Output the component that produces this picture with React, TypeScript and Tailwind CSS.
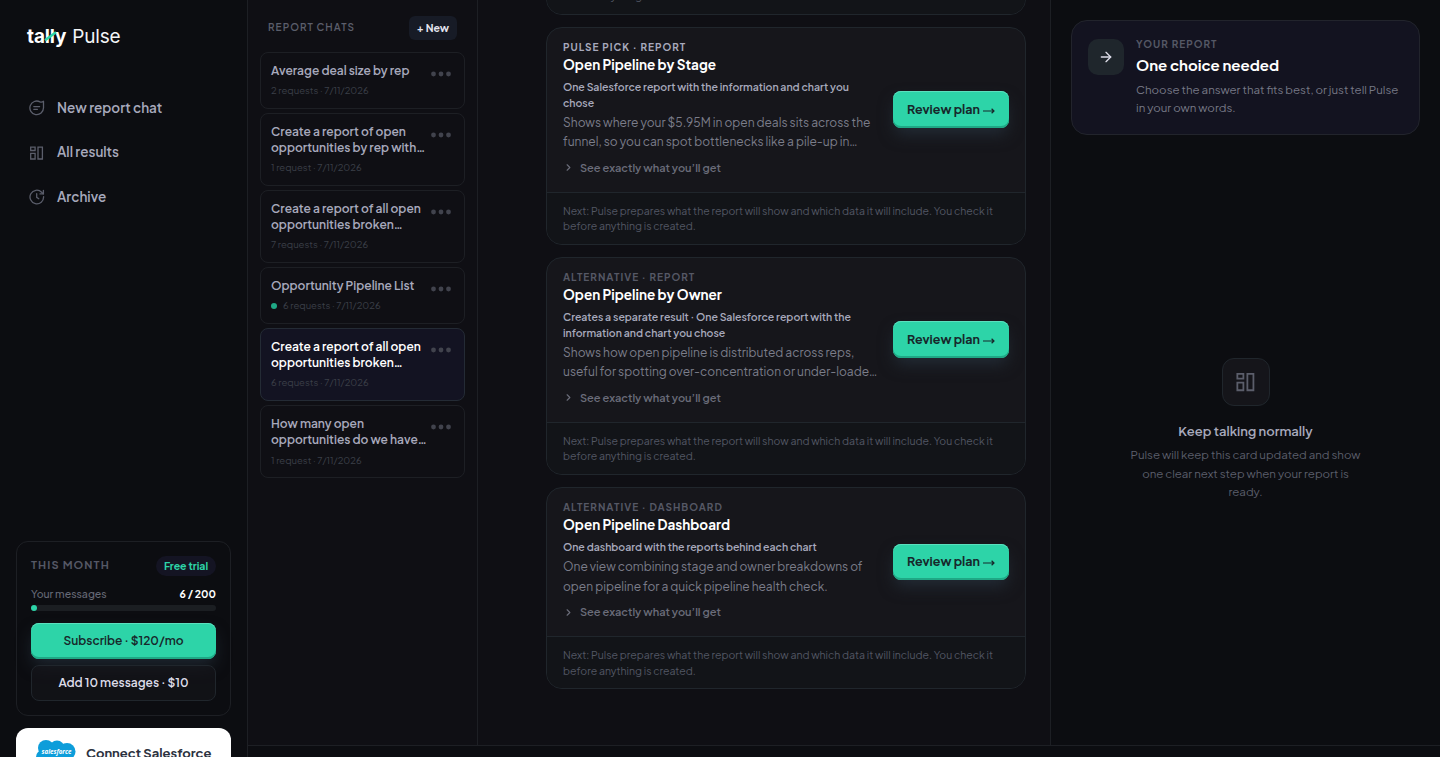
import React from 'react';
import { ArrowRight, ChevronRight } from 'lucide-react';

interface Chat {
  title: string[];
  meta: string;
  active?: boolean;
  unread?: boolean;
}

interface Plan {
  eyebrow: string;
  highlighted?: boolean;
  title: string;
  summary: string[];
  description: string[];
}

const chats: Chat[] = [
  { title: ['Average deal size by rep'], meta: '2 requests · 7/11/2026' },
  { title: ['Create a report of open', 'opportunities by rep with…'], meta: '1 request · 7/11/2026' },
  { title: ['Create a report of all open', 'opportunities broken…'], meta: '7 requests · 7/11/2026' },
  { title: ['Opportunity Pipeline List'], meta: '6 requests · 7/11/2026', unread: true },
  { title: ['Create a report of all open', 'opportunities broken…'], meta: '6 requests · 7/11/2026', active: true },
  { title: ['How many open', 'opportunities do we have…'], meta: '1 request · 7/11/2026' }
];

const plans: Plan[] = [
  {
    eyebrow: 'PULSE PICK · REPORT',
    highlighted: true,
    title: 'Open Pipeline by Stage',
    summary: ['One Salesforce report with the information and chart you', 'chose'],
    description: ['Shows where your $5.95M in open deals sits across the', 'funnel, so you can spot bottlenecks like a pile-up in…']
  },
  {
    eyebrow: 'ALTERNATIVE · REPORT',
    title: 'Open Pipeline by Owner',
    summary: ['Creates a separate result · One Salesforce report with the', 'information and chart you chose'],
    description: ['Shows how open pipeline is distributed across reps,', 'useful for spotting over-concentration or under-loade…']
  },
  {
    eyebrow: 'ALTERNATIVE · DASHBOARD',
    title: 'Open Pipeline Dashboard',
    summary: ['One dashboard with the reports behind each chart'],
    description: ['One view combining stage and owner breakdowns of', 'open pipeline for a quick pipeline health check.']
  }
];

const Lines: React.FC<{ lines: string[]; className: string }> = ({ lines, className }) => (
  <div className={className}>
    {lines.map((line) => (
      <span key={line} className="block whitespace-nowrap">{line}</span>
    ))}
  </div>
);

const ChatIcon: React.FC = () => (
  <svg viewBox="0 0 16 16" className="w-4 h-4" fill="none" stroke="currentColor" strokeWidth="1.3" strokeLinecap="round" strokeLinejoin="round">
    <path d="M14.5 1.3V7.8A6.8 6.8 0 1 1 11 1.9Q13 2.5 14.5 1.3Z" />
    <path d="M4.8 6.6h5.8M4.8 9.3h3.6" />
  </svg>
);

const BoardIcon: React.FC<{ className: string }> = ({ className }) => (
  <svg viewBox="0 0 16 16" className={className} fill="none" stroke="currentColor" strokeWidth="1.3">
    <path d="M1.7 2.1h4.4v3.4H1.7zM1.7 8.4h4.4V14H1.7zM9 2.1h4.4V14H9z" />
  </svg>
);

const ArchiveIcon: React.FC = () => (
  <svg viewBox="0 0 16 16" className="w-4 h-4" fill="none" stroke="currentColor" strokeWidth="1.3" strokeLinecap="round" strokeLinejoin="round">
    <path d="M14.6 7.6A6.8 6.8 0 1 1 12.6 3.2L14.2 4.8" />
    <path d="M14.4 1.3v3.6h-3.4" />
    <path d="M7.7 4.7v3.7l2.1 1.3" />
  </svg>
);

const Logo: React.FC = () => (
  <div className="relative flex items-center h-6 whitespace-nowrap text-white font-['Inter',sans-serif]">
    <span className="text-[19px] font-bold tracking-[-0.15px]">tally</span>
    <span className="ml-[6px] text-[19px] font-normal tracking-[-0.2px] text-gray-100">Pulse</span>
    <svg viewBox="0 0 14 12" className="absolute left-[17px] top-[4px] w-3.5 h-3" stroke="#2dd4a8" strokeWidth="2.6">
      <path d="M1 10.3 12 2.2" />
    </svg>
  </div>
);

const ChatCard: React.FC<{ chat: Chat }> = ({ chat }) => (
  <div
    className={`flex justify-between rounded-lg border px-2.5 py-2.5 ${
      chat.active ? 'border-[#242b35] bg-[#131322]' : 'border-[#1d1f24]'
    }`}
  >
    <div className="min-w-0">
      <Lines
        lines={chat.title}
        className={`text-xs leading-[16.2px] font-semibold ${chat.active ? 'text-white' : 'text-[#a7a9bc]'}`}
      />
      <div className="mt-[5px] flex items-center whitespace-nowrap text-[9.5px] leading-[13.7px] text-[#3b3f48]">
        {chat.unread && <span className="w-1.5 h-1.5 mr-1.5 rounded-full bg-[#1fa885]" />}
        {chat.meta}
      </div>
    </div>
    <svg viewBox="0 0 20 6" className="w-5 h-1.5 mt-2 mr-[3px] shrink-0 fill-[#41434d]">
      <circle cx="2.5" cy="3" r="2.4" />
      <circle cx="10" cy="3" r="2.4" />
      <circle cx="17.5" cy="3" r="2.4" />
    </svg>
  </div>
);

const PlanFooter: React.FC = () => (
  <Lines
    lines={['Next: Pulse prepares what the report will show and which data it will include. You check it', 'before anything is created.']}
    className="border-t border-[#20262c] bg-[#121418] px-4 pt-2.5 pb-[10px] text-[10.5px] leading-[15.5px] text-[#535764]"
  />
);

const PlanCard: React.FC<{ plan: Plan }> = ({ plan }) => (
  <div className="shrink-0 overflow-hidden rounded-2xl border border-[#20262c] bg-[#16161b]">
    <div className="flex items-center justify-between px-4 pt-3 pb-4">
      <div>
        <div className={`text-[10px] leading-[14px] font-bold tracking-[1px] ${plan.highlighted ? 'text-[#a7a9bc]' : 'text-[#555865]'}`}>
          {plan.eyebrow}
        </div>
        <h3 className="mt-[1.5px] text-[13.5px] leading-5 font-bold text-white">{plan.title}</h3>
        <Lines lines={plan.summary} className="mt-[3.5px] text-[10.5px] leading-[15.75px] font-semibold text-[#a7a9bc]" />
        <Lines lines={plan.description} className="mt-[2.75px] text-xs leading-[19.25px] text-[#7b7d8a]" />
        <div className="mt-[8.25px] flex items-center text-[11px] leading-4 font-semibold text-[#6a6c79]">
          <ChevronRight className="w-[11px] h-[11px] mr-1.5" strokeWidth={2.5} />
          See exactly what you’ll get
        </div>
      </div>
      <ReviewButton />
    </div>
    <PlanFooter />
  </div>
);

const ReviewButton: React.FC = () => (
  <button className="mt-[3.5px] flex h-[36.25px] w-29 shrink-0 items-center justify-center rounded-lg bg-[#2dd4a8] text-[12.5px] font-bold text-[#17282b] shadow-[0_8px_16px_-2px_#232c36,inset_0_1px_0_#5be0be,inset_0_-2px_0_#1fa885]">
    Review plan
    <svg viewBox="0 0 12 8" className="ml-[3px] mt-0.5 w-3 h-2" fill="none" stroke="currentColor" strokeWidth="1.2">
      <path d="M0 4h11M8.6 1.7 11 4 8.6 6.3" />
    </svg>
  </button>
);

const UsageCard: React.FC = () => (
  <div className="h-[175px] rounded-xl border border-[#1d1f24] px-3.5 pt-3.5">
    <div className="flex h-5 items-center justify-between">
      <span className="-mt-0.5 text-[11px] font-bold tracking-[1.1px] text-[#555865]">THIS MONTH</span>
      <span className="flex h-5 w-15 items-center justify-center rounded-full bg-[#141423] text-[10.5px] font-bold text-[#2dd4a8]">Free trial</span>
    </div>
    <div className="mt-2.5 flex h-4 items-center justify-between text-[10.5px]">
      <span className="font-medium text-[#666976]">Your messages</span>
      <span className="font-bold text-white">6 / 200</span>
    </div>
    <div className="mt-[3px] h-1.5 rounded-full bg-[#1b1e22]">
      <div className="h-1.5 w-1.5 rounded-full bg-[#2dd4a8]" />
    </div>
    <button className="mt-3 flex h-9 w-full items-center justify-center rounded-lg bg-[#2dd4a8] pb-px text-xs font-semibold text-[#17282b] shadow-[0_8px_16px_-2px_#1f2832,inset_0_1px_0_#5be0be,inset_0_-2px_0_#1fa885]">
      Subscribe · $120/mo
    </button>
    <button className="mt-1.5 flex h-9 w-full items-center justify-center rounded-lg border border-[#20262c] bg-[#15151b]/60 pb-px text-xs font-semibold text-[#dcdce8]">
      Add 10 messages · $10
    </button>
  </div>
);

const SalesforceLogo: React.FC = () => (
  <svg viewBox="0 0 40 28" className="w-10 h-7 shrink-0">
    <g fill="#0d9dda">
      <circle cx="10" cy="8" r="8" />
      <circle cx="21" cy="8" r="7.5" />
      <circle cx="31" cy="11.5" r="8.5" />
      <circle cx="7" cy="17" r="7" />
      <circle cx="16" cy="20" r="7.5" />
      <circle cx="25" cy="18" r="7.5" />
    </g>
    <text x="20.5" y="14" textAnchor="middle" fill="#fff" fontSize="6.2" fontStyle="italic" fontFamily="Open Sans, sans-serif">salesforce</text>
  </svg>
);

const Sidebar: React.FC = () => (
  <aside className="flex w-[248px] shrink-0 flex-col border-r border-[#1d1f24] bg-[#0c0d11] px-4">
    <div className="mt-[25.5px] ml-[11px]">
      <Logo />
    </div>
    <nav className="mt-[36.25px] flex flex-col text-[13.5px] font-semibold text-[#a7a9bc]">
      <a className="flex h-[44.5px] items-center gap-3 pl-[13px]">
        <span className="text-[#5b5e6b]"><ChatIcon /></span>New report chat
      </a>
      <a className="flex h-[44.5px] items-center gap-3 pl-[13px]">
        <span className="text-[#5b5e6b]"><BoardIcon className="w-4 h-4" /></span>All results
      </a>
      <a className="flex h-[44.5px] items-center gap-3 pl-[13px]">
        <span className="text-[#5b5e6b]"><ArchiveIcon /></span>Archive
      </a>
    </nav>
    <div className="mt-auto h-[216px] shrink-0">
      <UsageCard />
      <div className="mt-3 flex h-[52px] items-center gap-2.5 rounded-t-xl bg-white pl-5 text-[13px] font-bold whitespace-nowrap text-[#2c3240]">
        <SalesforceLogo />
        Connect Salesforce
      </div>
    </div>
  </aside>
);

const ChatList: React.FC = () => (
  <section className="w-[230px] shrink-0 border-r border-[#1d1f24] bg-[#0f0f14] px-3">
    <div className="mt-4 mb-3 flex h-6 items-center justify-between pr-2 pl-2">
      <span className="-mt-0.5 text-[10px] font-semibold tracking-[1.05px] text-[#5b5e6b]">REPORT CHATS</span>
      <button className="h-6 w-12 rounded-md bg-[#171b26] text-[10.5px] font-bold text-[#e4e4ee]">+ New</button>
    </div>
    <div className="flex w-[205px] flex-col gap-1">
      {chats.map((chat, index) => (
        <ChatCard key={index} chat={chat} />
      ))}
    </div>
  </section>
);

const ReportPanel: React.FC = () => (
  <section className="flex w-[390px] shrink-0 flex-col border-l border-[#1d1f24] bg-[#0c0d11] px-5 pt-5">
    <div className="flex h-[115px] rounded-2xl border border-[#22242c] bg-[#131320] px-4">
      <span className="mt-[18px] flex h-9 w-9 shrink-0 items-center justify-center rounded-[10px] bg-[#1f262c] text-[#dcdce8]">
        <ArrowRight className="w-4 h-4" strokeWidth={2} />
      </span>
      <div className="ml-3 pt-4">
        <div className="text-[10px] leading-[14px] font-bold tracking-[1px] text-[#555865]">YOUR REPORT</div>
        <h2 className="mt-1 text-[15px] leading-5 font-bold text-white">One choice needed</h2>
        <Lines
          lines={['Choose the answer that fits best, or just tell Pulse', 'in your own words.']}
          className="mt-[5.5px] text-[11.5px] leading-[18px] text-[#777986]"
        />
      </div>
    </div>
    <div className="mt-[223px] flex flex-col items-center text-center">
      <span className="flex h-12 w-12 items-center justify-center rounded-xl border border-[#20262c] bg-[#15151a] text-[#5b5e6b]">
        <BoardIcon className="w-[22px] h-[22px]" />
      </span>
      <h3 className="mt-[15px] text-[13px] leading-5 font-semibold text-[#a7a9bc]">Keep talking normally</h3>
      <Lines
        lines={['Pulse will keep this card updated and show', 'one clear next step when your report is', 'ready.']}
        className="mt-[5px] text-[11.5px] leading-[18.5px] text-[#5b5e6b]"
      />
    </div>
  </section>
);

const App: React.FC = () => {
  return (
    <div className="flex h-[757px] w-[1440px] overflow-hidden bg-[#0c0d11] font-['Plus_Jakarta_Sans','Inter',sans-serif]">
      <Sidebar />
      <div className="flex min-w-0 flex-1 flex-col">
        <div className="flex h-[745px] shrink-0">
          <ChatList />
          <main className="flex min-w-0 flex-1 flex-col justify-end gap-3 overflow-hidden bg-[#0f0f14] pr-6 pb-14 pl-[68px]">
            <div className="shrink-0 overflow-hidden rounded-2xl border border-[#20262c]">
              <PlanFooter />
            </div>
            {plans.map((plan) => (
              <PlanCard key={plan.title} plan={plan} />
            ))}
          </main>
          <ReportPanel />
        </div>
        <div className="flex-1 border-t border-[#1d1f24] bg-[#0c0d11]" />
      </div>
    </div>
  );
};

export default App;
